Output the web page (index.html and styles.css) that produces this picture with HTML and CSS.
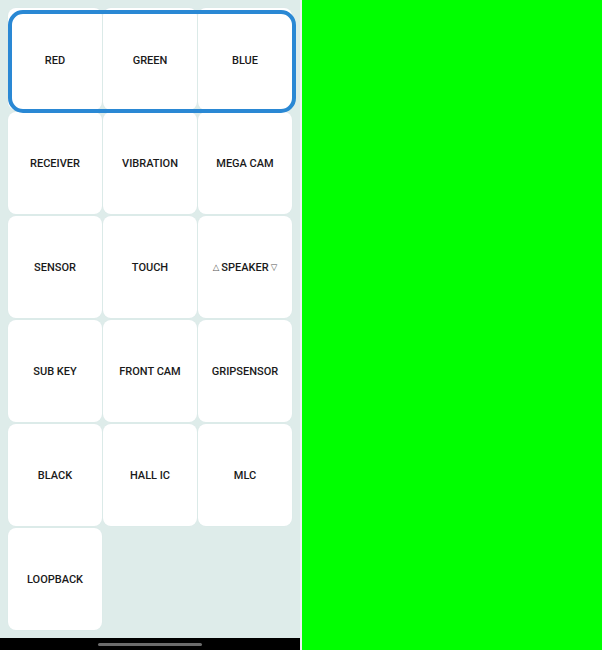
FILE: index.html
```html
<!DOCTYPE html>
<html>
<head>
<meta charset="utf-8">
<link rel="stylesheet" href="styles.css">
</head>
<body>
<div class="screen">
  <div class="panel">
    <div class="grid">
      <div class="cell">RED</div>
      <div class="cell">GREEN</div>
      <div class="cell">BLUE</div>
      <div class="cell">RECEIVER</div>
      <div class="cell">VIBRATION</div>
      <div class="cell">MEGA CAM</div>
      <div class="cell">SENSOR</div>
      <div class="cell">TOUCH</div>
      <div class="cell"><span class="tri">△</span>SPEAKER<span class="tri">▽</span></div>
      <div class="cell">SUB KEY</div>
      <div class="cell">FRONT CAM</div>
      <div class="cell">GRIPSENSOR</div>
      <div class="cell">BLACK</div>
      <div class="cell">HALL IC</div>
      <div class="cell">MLC</div>
      <div class="cell">LOOPBACK</div>
      <div class="focus"></div>
    </div>
    <div class="navbar"><div class="handle"></div></div>
  </div>
  <div class="divider"></div>
  <div class="green"></div>
</div>
</body>
</html>
```

FILE: styles.css
```css
* { box-sizing: border-box; }
html, body { margin: 0; padding: 0; }
body {
  width: 602px;
  height: 650px;
  overflow: hidden;
  font-family: Roboto, "Liberation Sans", sans-serif;
}
.screen {
  display: flex;
  width: 602px;
  height: 650px;
}
.panel {
  width: 300px;
  height: 650px;
  background: #deecea;
  display: flex;
  flex-direction: column;
}
.grid {
  position: relative;
  flex: 1;
  display: grid;
  grid-template-columns: 94px 94px 94px;
  grid-auto-rows: 102px;
  column-gap: 1px;
  row-gap: 2px;
  padding: 8px 0 0 8px;
  align-content: start;
}
.grid .cell:nth-child(-n+3) {
  padding-top: 2px;
}
.cell {
  background: #fff;
  border-radius: 8px;
  display: flex;
  align-items: center;
  justify-content: center;
  font-size: 11px;
  font-weight: 500;
  color: #1a1a1a;
  box-shadow: 0 0 0 0.5px rgba(215, 228, 228, 0.35);
}
.tri {
  font-size: 8.5px;
  color: #555;
  margin: 0 2px;
  font-family: "DejaVu Sans", sans-serif;
  font-weight: normal;
}
.focus {
  position: absolute;
  left: 8px;
  top: 10px;
  width: 288px;
  height: 103px;
  border: 4px solid #2a88d4;
  border-radius: 15px;
  pointer-events: none;
}
.navbar {
  height: 12px;
  background: #000;
  display: flex;
  justify-content: center;
  align-items: center;
}
.handle {
  width: 104px;
  height: 3px;
  border-radius: 2px;
  background: #6b6b6b;
}
.divider {
  width: 2px;
  background: #eef3f3;
}
.green {
  flex: 1;
  background: #00ff00;
}
```
